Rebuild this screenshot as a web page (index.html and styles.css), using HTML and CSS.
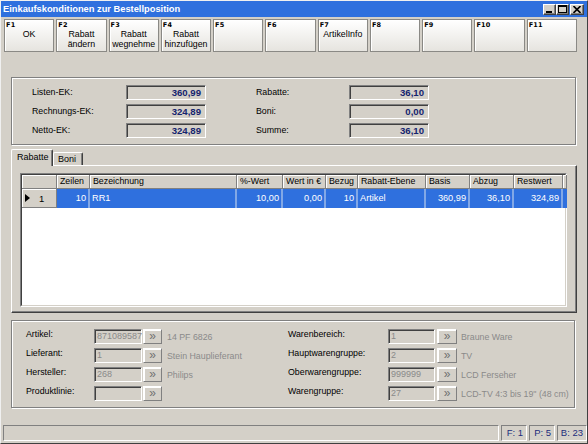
FILE: index.html
```html
<!DOCTYPE html>
<html lang="de">
<head>
<meta charset="utf-8">
<title>Einkaufskonditionen zur Bestellposition</title>
<link rel="stylesheet" href="styles.css">
</head>
<body>
<div class="window">
  <div class="titlebar">
    <span class="title">Einkaufskonditionen zur Bestellposition</span>
    <div class="wctl">
      <span class="wbtn"><svg width="9" height="7" viewBox="0 0 9 7"><rect x="1" y="5" width="6" height="2" fill="#000"/></svg></span>
      <span class="wbtn"><svg width="9" height="8" viewBox="0 0 9 8"><rect x="0.5" y="0.5" width="8" height="7" fill="none" stroke="#000"/><rect x="0" y="0" width="9" height="2" fill="#000"/></svg></span>
      <span class="wbtn close"><svg width="8" height="7" viewBox="0 0 8 7"><path d="M0.5 0 L7.5 7 M7.5 0 L0.5 7" stroke="#000" stroke-width="1.6"/></svg></span>
    </div>
  </div>

  <div class="fkeys">
    <div class="fkey"><span class="fk">F1</span><span class="fl">OK</span></div>
    <div class="fkey"><span class="fk">F2</span><span class="fl">Rabatt<br>ändern</span></div>
    <div class="fkey"><span class="fk">F3</span><span class="fl">Rabatt<br>wegnehme</span></div>
    <div class="fkey"><span class="fk">F4</span><span class="fl">Rabatt<br>hinzufügen</span></div>
    <div class="fkey"><span class="fk">F5</span></div>
    <div class="fkey"><span class="fk">F6</span></div>
    <div class="fkey"><span class="fk">F7</span><span class="fl">ArtikelInfo</span></div>
    <div class="fkey"><span class="fk">F8</span></div>
    <div class="fkey"><span class="fk">F9</span></div>
    <div class="fkey"><span class="fk">F10</span></div>
    <div class="fkey"><span class="fk">F11</span></div>
  </div>

  <div class="group summary">
    <span class="lbl">Listen-EK:</span><span class="val">360,99</span><span></span><span class="lbl">Rabatte:</span><span class="val">36,10</span>
    <span class="lbl">Rechnungs-EK:</span><span class="val">324,89</span><span></span><span class="lbl">Boni:</span><span class="val">0,00</span>
    <span class="lbl">Netto-EK:</span><span class="val">324,89</span><span></span><span class="lbl">Summe:</span><span class="val">36,10</span>
  </div>

  <div class="tabs">
    <span class="tab active">Rabatte</span><span class="tab">Boni</span>
  </div>
  <div class="tabpanel">
    <div class="grid">
      <div class="gridin">
        <div class="row head">
          <span class="hc"></span>
          <span class="hc">Zeilen</span>
          <span class="hc">Bezeichnung</span>
          <span class="hc">%-Wert</span>
          <span class="hc">Wert in €</span>
          <span class="hc">Bezug</span>
          <span class="hc">Rabatt-Ebene</span>
          <span class="hc">Basis</span>
          <span class="hc">Abzug</span>
          <span class="hc">Restwert</span>
          <span class="hc fill"></span>
        </div>
        <div class="row sel">
          <span class="ind"><span class="arrow"></span><span class="num">1</span></span>
          <span class="dc r">10</span>
          <span class="dc">RR1</span>
          <span class="dc r">10,00</span>
          <span class="dc r">0,00</span>
          <span class="dc r">10</span>
          <span class="dc">Artikel</span>
          <span class="dc r">360,99</span>
          <span class="dc r">36,10</span>
          <span class="dc r">324,89</span>
          <span class="dc fill"></span>
        </div>
      </div>
    </div>
  </div>

  <div class="group details">
    <span class="lbl">Artikel:</span><span class="dis">871089587</span><span class="bcell"><span class="more">»</span></span><span class="info">14 PF 6826</span>
    <span class="lbl">Warenbereich:</span><span class="dis">1</span><span class="bcell r2"><span class="more">»</span></span><span class="info">Braune Ware</span>

    <span class="lbl">Lieferant:</span><span class="dis">1</span><span class="bcell"><span class="more">»</span></span><span class="info">Stein Hauplieferant</span>
    <span class="lbl">Hauptwarengruppe:</span><span class="dis">2</span><span class="bcell r2"><span class="more">»</span></span><span class="info">TV</span>

    <span class="lbl">Hersteller:</span><span class="dis">268</span><span class="bcell"><span class="more">»</span></span><span class="info">Philips</span>
    <span class="lbl">Oberwarengruppe:</span><span class="dis">999999</span><span class="bcell r2"><span class="more">»</span></span><span class="info">LCD Ferseher</span>

    <span class="lbl">Produktlinie:</span><span class="dis"></span><span class="bcell"><span class="more">»</span></span><span class="info"></span>
    <span class="lbl">Warengruppe:</span><span class="dis">27</span><span class="bcell r2"><span class="more">»</span></span><span class="info">LCD-TV 4:3 bis 19" (48 cm)</span>
  </div>

  <div class="statusbar">
    <span class="sp main"></span>
    <span class="sp s1">F: 1</span>
    <span class="sp s1">P: 5</span>
    <span class="sp s2">B: 23</span>
  </div>
</div>
</body>
</html>
```

FILE: styles.css
```css
* { box-sizing: border-box; }
html, body { margin: 0; padding: 0; }
body {
  background: #d4d0c8;
  font-family: "Liberation Sans", Arial, sans-serif;
  font-size: 8.8px;
  color: #000;
}
.window {
  width: 588px;
  height: 444px;
  background: #d4d0c8;
  border: 1px solid;
  border-color: #f0f0f0 #404040 #404040 #f0f0f0;
  overflow: hidden;
}

/* title bar */
.titlebar {
  height: 16px;
  background: #2f70de;
  display: flex;
  align-items: center;
  padding: 0 3px 0 2px;
}
.title {
  color: #fff;
  font-weight: bold;
  font-size: 9.3px;
  white-space: nowrap;
}
.wctl { margin-left: auto; display: flex; }
.wbtn {
  width: 13px;
  height: 11px;
  background: #d4d0c8;
  border: 1px solid;
  border-color: #fff #404040 #404040 #fff;
  box-shadow: inset -1px -1px 0 #808080;
  display: flex;
  align-items: center;
  justify-content: center;
}
.wbtn.close { margin-left: 1px; width: 14px; }

/* function keys */
.fkeys {
  margin: 2px 0 0 3px;
  width: 573px;
  height: 33px;
  display: grid;
  grid-template-columns: repeat(11, 1fr);
  column-gap: 2px;
}
.fkey {
  border: 1px solid #8a8985;
  background: linear-gradient(#ffffff, #e6e4df);
  box-shadow: inset 1px 1px 0 #fff;
  display: flex;
  flex-direction: column;
}
.fk {
  font-family: "DejaVu Sans", sans-serif;
  font-weight: bold;
  font-size: 6.5px;
  line-height: 8px;
  padding: 1px 0 0 1px;
  letter-spacing: 0.2px;
}
.fl {
  text-align: center;
  line-height: 10px;
  white-space: nowrap;
}

/* group boxes */
.group {
  border: 1px solid #808080;
  box-shadow: inset 1px 1px 0 #fff, 1px 1px 0 #fff;
  margin-left: 10px;
}
.summary {
  margin-top: 25px;
  width: 565px;
  height: 68px;
  padding: 7px 0 0 20px;
  display: grid;
  grid-template-columns: 94px 80px 50px 93px 80px;
  grid-template-rows: repeat(3, 15px);
  row-gap: 4px;
  align-items: center;
}
.summary .lbl { margin-top: -2px; }
.val {
  height: 15px;
  border: 1px solid;
  border-color: #808080 #fff #fff #808080;
  box-shadow: inset 1px 1px 0 #404040;
  background: #d4d0c8;
  color: #14246e;
  font-weight: bold;
  font-size: 9.6px;
  line-height: 13px;
  text-align: right;
  padding-right: 4px;
}

/* tabs */
.tabs {
  margin: 4px 0 0 10px;
  height: 16px;
  display: flex;
  align-items: flex-end;
}
.tab {
  height: 13px;
  background: #d4d0c8;
  border: 1px solid;
  border-color: #fff #404040 transparent #fff;
  border-bottom: none;
  border-radius: 2px 2px 0 0;
  box-shadow: inset -1px 0 0 #808080;
  padding: 0 6px 0 4px;
  line-height: 12px;
  font-size: 9px;
}
.tab.active {
  height: 17px;
  margin-bottom: -1px;
  position: relative;
  z-index: 1;
  padding: 1px 5px 0 5px;
  width: 42px;
}
.tabpanel {
  margin-left: 10px;
  width: 566px;
  height: 148px;
  border: 1px solid;
  border-color: #fff #404040 #404040 #fff;
  box-shadow: inset -1px -1px 0 #808080;
  padding: 7px 0 0 8px;
}
.grid {
  width: 547px;
  height: 134px;
  border: 1px solid;
  border-color: #808080 #fff #fff #808080;
}
.gridin {
  height: 100%;
  border: 1px solid;
  border-color: #404040 #d4d0c8 #d4d0c8 #404040;
  background: #fff;
}
.row {
  display: grid;
  grid-template-columns: 35px 33px 147px 46px 43px 32px 68px 44px 44px 49px 1fr;
}
.row.head { height: 14px; }
.row.sel { height: 19px; }
.hc {
  background: #d4d0c8;
  border-right: 1px solid #808080;
  border-bottom: 1px solid #808080;
  box-shadow: inset 1px 1px 0 #fff;
  padding-left: 3px;
  line-height: 13px;
  white-space: nowrap;
  overflow: hidden;
}
.ind {
  background: #d4d0c8;
  border-right: 1px solid #808080;
  border-bottom: 1px solid #808080;
  box-shadow: inset 1px 1px 0 #fff;
  display: flex;
  align-items: center;
  padding-left: 3px;
}
.arrow {
  width: 0;
  height: 0;
  border-top: 4px solid transparent;
  border-bottom: 4px solid transparent;
  border-left: 5px solid #000;
}
.num { margin-left: 9px; font-size: 9.5px; }
.dc {
  background: #2f70de;
  color: #fff;
  border-right: 2px solid #82a8e6;
  padding: 0 2px;
  line-height: 18px;
  white-space: nowrap;
  font-size: 9.2px;
}
.dc.r { text-align: right; }
.dc.fill { border-right: none; }

/* details */
.details {
  margin-top: 7px;
  width: 564px;
  height: 88px;
  padding: 8px 0 0 14px;
  display: grid;
  grid-template-columns: 68px 48px 20px 126px 100px 47px 22px 1fr;
  grid-template-rows: repeat(4, 15px);
  row-gap: 4px;
  align-items: center;
}
.details .lbl { align-self: start; line-height: 10px; }
.dis {
  height: 15px;
  border: 1px solid;
  border-color: #808080 #fff #fff #808080;
  box-shadow: inset 1px 1px 0 #404040;
  background: #d4d0c8;
  color: #8a8a8a;
  line-height: 13px;
  padding-left: 2px;
  font-size: 9px;
}
.bcell { height: 15px; padding-left: 1px; }
.bcell.r2 { padding-left: 2px; }
.more {
  display: flex;
  align-items: center;
  justify-content: center;
  height: 15px;
  background: #d4d0c8;
  border: 1px solid;
  border-color: #fff #808080 #808080 #fff;
  box-shadow: 1px 1px 0 #fff inset;
  color: #707070;
  font-size: 12px;
  line-height: 12px;
  padding-bottom: 1px;
}
.info {
  color: #8a8a8a;
  padding-left: 5px;
  white-space: nowrap;
}
.details .info:nth-child(8n) { padding-left: 4px; }

/* status bar */
.statusbar {
  margin: 17px 0 0 2px;
  height: 16px;
  display: flex;
  gap: 2px;
}
.sp {
  border: 1px solid;
  border-color: #808080 #fff #fff #808080;
  color: #1c2c7c;
  text-align: right;
  padding-right: 3px;
  line-height: 14px;
  font-size: 9.5px;
}
.sp.main { width: 497px; }
.sp.s1 { width: 26px; }
.sp.s2 { width: 30px; }
```
